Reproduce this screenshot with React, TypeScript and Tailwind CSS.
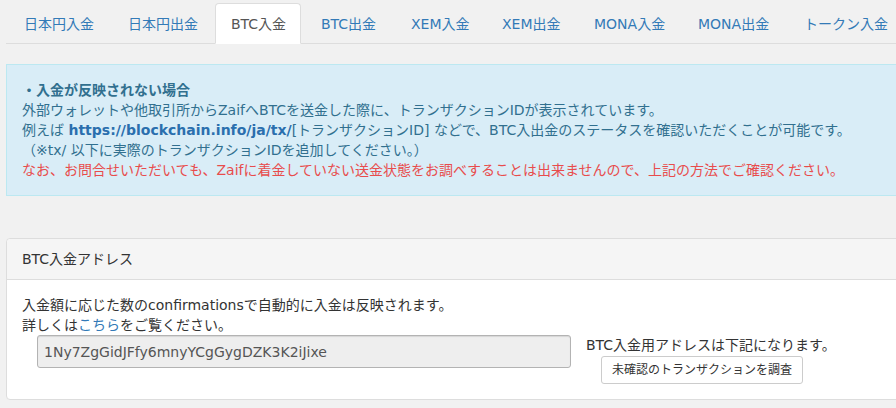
import React from "react";

const tabs = [
  { label: "日本円入金", w: "w-[102px]", mr: "mr-[2px]" },
  { label: "日本円出金", w: "w-[101px]", mr: "mr-[2px]" },
  { label: "BTC入金", w: "w-[86px]", mr: "mr-[4px]", active: true },
  { label: "BTC出金", w: "w-[88px]", mr: "mr-[2px]" },
  { label: "XEM入金", w: "w-[89px]", mr: "mr-[2px]" },
  { label: "XEM出金", w: "w-[90px]", mr: "mr-[2px]" },
  { label: "MONA入金", w: "w-[102px]", mr: "mr-[2px]" },
  { label: "MONA出金", w: "w-[104px]", mr: "mr-[2px]" },
  { label: "トークン入金", w: "w-[110px]", mr: "mr-[2px]" },
];

export default function App() {
  return (
    <div
      className="w-[896px] h-[408px] overflow-hidden bg-[#f1f1f1] text-[14px] leading-[20px] text-[#333]"
      style={{ fontFamily: '"DejaVu Sans", "Noto Sans CJK JP", sans-serif' }}
    >
      <div className="ml-[6px] w-[1000px]">
        <ul className="flex mt-[3px] border-b border-[#ddd]">
          {tabs.map((t, i) => (
            <li
              key={t.label}
              className={`${t.w} ${t.mr} ${i === 0 ? "ml-[2px]" : ""} -mb-px h-[41px] shrink-0 whitespace-nowrap pl-[15px] pt-[10px] rounded-t-[4px] border ${
                t.active
                  ? "bg-white border-[#ddd] border-b-white text-[#555]"
                  : "border-transparent text-[#337ab7]"
              }`}
            >
              {t.label}
            </li>
          ))}
        </ul>

        <div className="mt-[20px] border border-[#bce8f1] bg-[#d9edf7] px-[15px] py-[15px] text-[#31708f] whitespace-nowrap">
          <div className="font-bold">・入金が反映されない場合</div>
          <div>外部ウォレットや他取引所からZaifへBTCを送金した際に、トランザクションIDが表示されています。</div>
          <div>
            例えば <span className="font-bold text-[#2a6fae]">https://blockchain.info/ja/tx/</span>[トランザクションID] などで、BTC入出金のステータスを確認いただくことが可能です。
          </div>
          <div>（※tx/ 以下に実際のトランザクションIDを追加してください。）</div>
          <div className="text-[#e84c4c]">
            なお、お問合せいただいても、Zaifに着金していない送金状態をお調べすることは出来ませんので、上記の方法でご確認ください。
          </div>
        </div>

        <div className="mt-[42px] border border-[#ddd] rounded-[4px] bg-white">
          <div className="h-[41px] border-b border-[#ddd] bg-[#f5f5f5] rounded-t-[4px] px-[15px] pt-[10px]">
            BTC入金アドレス
          </div>
          <div className="px-[15px] pt-[15px] pb-[15px]">
            <div>入金額に応じた数のconfirmationsで自動的に入金は反映されます。</div>
            <div>
              詳しくは<span className="text-[#337ab7]">こちら</span>をご覧ください。
            </div>
            <div className="flex">
              <div className="w-[564px] px-[15px]">
                <div className="h-[33px] rounded-[3px] border border-[#b3b3b3] bg-[#eeeeee] pl-[6px] pt-[6px] text-[#555] shadow-[inset_0_1px_1px_rgba(0,0,0,0.1)] whitespace-nowrap">
                  1Ny7ZgGidJFfy6mnyYCgGygDZK3K2iJixe
                </div>
              </div>
              <div>
                <div className="whitespace-nowrap">BTC入金用アドレスは下記になります。</div>
                <button className="mt-[1px] ml-[15px] h-[28px] rounded-[3px] border border-[#ccc] bg-white px-[10px] text-[12px] leading-[16px] text-[#333] whitespace-nowrap">
                  未確認のトランザクションを調査
                </button>
              </div>
            </div>
          </div>
        </div>
      </div>
    </div>
  );
}
